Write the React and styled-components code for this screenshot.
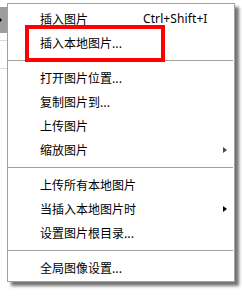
import React from 'react';
import styled, { createGlobalStyle } from 'styled-components';

const GlobalStyle = createGlobalStyle`
  html, body {
    margin: 0;
    padding: 0;
    background: #ffffff;
  }
  body {
    font-family: "Noto Sans CJK SC", "Noto Sans", sans-serif;
    font-size: 12px;
    color: #000;
  }
`;

const Page = styled.div`
  position: relative;
  display: flex;
  width: 242px;
  height: 297px;
  overflow: hidden;
`;

const ParentEdge = styled.div`
  width: 7px;
  display: flex;
  flex-direction: column;
`;

const ParentHighlight = styled.div`
  margin-top: 7px;
  height: 26px;
  background: #9d9d9d;
  display: flex;
  align-items: center;
`;

const ParentArrow = styled.div`
  width: 0;
  height: 0;
  border-top: 3px solid transparent;
  border-bottom: 3px solid transparent;
  border-left: 3px solid #000;
  margin-left: -1px;
`;

const ParentRule = styled.div`
  height: 1px;
  background: #d8d8d8;
  margin-top: ${p => p.gap}px;
`;

const Menu = styled.div`
  margin-top: 3px;
  width: 228px;
  height: 279px;
  box-sizing: border-box;
  border: 1px solid #a0a0a0;
  background: #ffffff;
  padding: 3px 0 1px;
  box-shadow: 4px 4px 3px rgba(0, 0, 0, 0.55);
  display: flex;
  flex-direction: column;
`;

const Item = styled.div`
  height: 24px;
  display: grid;
  grid-template-columns: 103px 1fr 12px;
  align-items: center;
  padding-left: 32px;
  padding-right: 7px;
  line-height: 24px;
  white-space: nowrap;
`;

const Shortcut = styled.span`
  font-family: "Noto Sans", "Liberation Sans", sans-serif;
  letter-spacing: 0.1px;
`;

const SubArrow = styled.span`
  justify-self: end;
  width: 0;
  height: 0;
  border-top: 3.5px solid transparent;
  border-bottom: 3.5px solid transparent;
  border-left: 4px solid ${p => p.color};
`;

const Separator = styled.div`
  height: 1px;
  background: #a0a0a0;
  margin: 5px 1px 5px 0;
`;

const Highlight = styled.div`
  position: absolute;
  left: 25px;
  top: 25px;
  width: 140px;
  height: 37px;
  box-sizing: border-box;
  border: 4px solid #ff0000;
  pointer-events: none;
`;

const groups = [
  [
    { label: '插入图片', shortcut: 'Ctrl+Shift+I' },
    { label: '插入本地图片...' },
  ],
  [
    { label: '打开图片位置...' },
    { label: '复制图片到...' },
    { label: '上传图片' },
    { label: '缩放图片', sub: '#4a4a4a' },
  ],
  [
    { label: '上传所有本地图片' },
    { label: '当插入本地图片时', sub: '#000' },
    { label: '设置图片根目录...' },
  ],
  [{ label: '全局图像设置...' }],
];

export default function App() {
  return (
    <Page>
      <GlobalStyle />
      <ParentEdge>
        <ParentHighlight>
          <ParentArrow />
        </ParentHighlight>
        <ParentRule gap={7} />
        <ParentRule gap={27} />
      </ParentEdge>
      <Menu>
        {groups.map((group, gi) => (
          <React.Fragment key={gi}>
            {gi > 0 && <Separator />}
            {group.map(item => (
              <Item key={item.label}>
                <span>{item.label}</span>
                {item.shortcut ? <Shortcut>{item.shortcut}</Shortcut> : <span />}
                {item.sub ? <SubArrow color={item.sub} /> : <span />}
              </Item>
            ))}
          </React.Fragment>
        ))}
      </Menu>
      <Highlight />
    </Page>
  );
}
